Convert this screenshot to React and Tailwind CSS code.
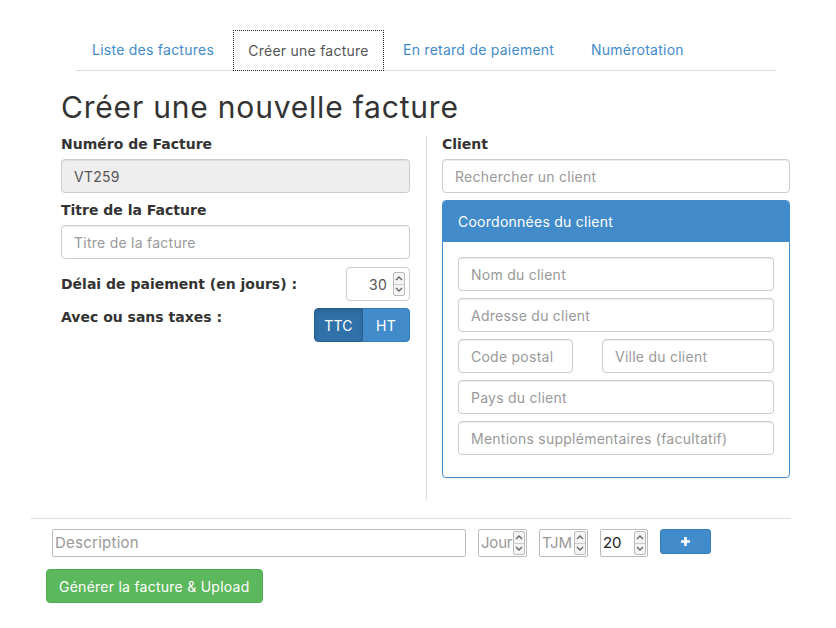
import React from "react";

const inputCls =
  "block w-full h-[34px] px-3 text-[14px] text-[#555] bg-white border border-[#ccc] rounded-[4px] shadow-[inset_0_1px_1px_rgba(0,0,0,0.075)] placeholder:text-[#999] outline-none tracking-[0.25px]";

const bold = { fontFamily: "'DejaVu Sans', sans-serif", letterSpacing: 0 };

function Spinner() {
  return (
    <div className="flex flex-col w-[12px] h-[24px] border border-[#bbb] rounded-[2px] bg-[#f4f4f4] shrink-0">
      <div className="flex-1 flex items-center justify-center border-b border-[#ccc]">
        <svg width="8" height="5" viewBox="0 0 8 5"><path d="M1 4 L4 1 L7 4" fill="none" stroke="#666" strokeWidth="1.4" /></svg>
      </div>
      <div className="flex-1 flex items-center justify-center">
        <svg width="8" height="5" viewBox="0 0 8 5"><path d="M1 1 L4 4 L7 1" fill="none" stroke="#666" strokeWidth="1.4" /></svg>
      </div>
    </div>
  );
}

function SmallNum({ w, value, placeholder }) {
  return (
    <div className={`flex items-center h-[28px] border border-[#bbb] rounded-[2px] pl-[2px] pr-[1px] bg-white ${w}`}>
      <span className={`flex-1 min-w-0 overflow-hidden whitespace-nowrap text-[15px] tracking-[-0.2px] ${value ? "text-[#222]" : "text-[#999]"}`}>
        {value || placeholder}
      </span>
      <Spinner />
    </div>
  );
}

export default function App() {
  return (
    <div className="w-[836px] h-[628px] bg-white text-[#333] text-[14px] tracking-[0.25px]" style={{ fontFamily: "Inter, sans-serif" }}>
      <div className="pt-[30px] pl-[76px] w-[776px]">
        <div className="flex border-b border-[#ddd] h-[41px]">
          <div className="w-[157px] pl-[16px] h-[40px] flex items-center text-[#428bca] pb-[1px]">Liste des factures</div>
          <div className="w-[151px] h-[41px] flex items-center justify-center text-[#555] border border-dotted border-[#222] bg-white pb-[1px]">Créer une facture</div>
          <div className="w-[192px] pl-[19px] h-[40px] flex items-center text-[#428bca] pb-[1px]">En retard de paiement</div>
          <div className="pl-[15px] h-[40px] flex items-center text-[#428bca] pb-[1px]">Numérotation</div>
        </div>
      </div>
      <div className="pl-[61px] pr-[46px]">
        <h1 className="text-[30px] leading-[33px] mt-[20px] mb-[10px] text-[#333] font-normal tracking-[0.8px]">Créer une nouvelle facture</h1>
        <div className="flex">
          <div className="w-[349px]">
            <label className="block font-bold text-[14px] leading-[20px] mb-[5px]" style={bold}>Numéro de Facture</label>
            <div className={`${inputCls} !bg-[#eee] flex items-center`}>VT259</div>
            <label className="block font-bold text-[14px] leading-[20px] mt-[7px] mb-[5px]" style={bold}>Titre de la Facture</label>
            <input className={inputCls} placeholder="Titre de la facture" />
            <div className="flex items-center justify-between mt-[8px]">
              <span className="font-bold" style={bold}>Délai de paiement (en jours) :</span>
              <div className="w-[64px] h-[34px] border border-[#ccc] rounded-[4px] flex items-center justify-end pr-[4px] gap-[6px]">
                <span className="text-[#555]">30</span>
                <Spinner />
              </div>
            </div>
            <div className="flex items-start justify-between mt-[7px]">
              <span className="font-bold mt-[-1px]" style={bold}>Avec ou sans taxes :</span>
              <div className="flex h-[34px] rounded-[4px] overflow-hidden">
                <div className="w-[49px] flex items-center justify-center bg-[#3071a9] text-white border border-[#285e8e] rounded-l-[4px] shadow-[inset_0_3px_5px_rgba(0,0,0,0.125)]">TTC</div>
                <div className="w-[47px] flex items-center justify-center bg-[#428bca] text-white border border-[#357ebd] border-l-0 rounded-r-[4px]">HT</div>
              </div>
            </div>
          </div>
          <div className="w-[32px] flex justify-center">
            <div className="w-px bg-[#ddd] h-[364px] mt-[2px]"></div>
          </div>
          <div className="w-[348px]">
            <label className="block font-bold text-[14px] leading-[20px] mb-[5px]" style={bold}>Client</label>
            <input className={inputCls} placeholder="Rechercher un client" />
            <div className="mt-[7px] border border-[#428bca] rounded-[4px] h-[278px] shadow-[0_1px_1px_rgba(0,0,0,0.05)]">
              <div className="h-[41px] bg-[#428bca] text-white px-[15px] flex items-center rounded-t-[3px]">Coordonnées du client</div>
              <div className="px-[15px] pt-[15px] flex flex-col gap-[7px]">
                <input className={inputCls} placeholder="Nom du client" />
                <input className={inputCls} placeholder="Adresse du client" />
                <div className="flex justify-between">
                  <input className={`${inputCls} !w-[115px]`} placeholder="Code postal" />
                  <input className={`${inputCls} !w-[172px]`} placeholder="Ville du client" />
                </div>
                <input className={inputCls} placeholder="Pays du client" />
                <input className={inputCls} placeholder="Mentions supplémentaires (facultatif)" />
              </div>
            </div>
          </div>
        </div>
      </div>
      <div className="mx-[31px] w-[760px] border-t border-[#ddd] mt-[18px]"></div>
      <div className="flex items-center pl-[52px] mt-[10px] gap-[12px]">
        <div className="w-[414px] h-[28px] border border-[#bbb] rounded-[2px] px-[2px] flex items-center text-[15px] text-[#999]">Description</div>
        <SmallNum w="w-[49px]" placeholder="Jours" />
        <SmallNum w="w-[49px]" placeholder="TJM" />
        <SmallNum w="w-[48px]" value="20" />
        <div className="w-[51px] h-[25px] bg-[#428bca] border border-[#357ebd] rounded-[3px] flex items-center justify-center self-start">
          <svg width="11" height="11" viewBox="0 0 11 11"><path d="M5.5 1 V10 M1 5.5 H10" stroke="white" strokeWidth="2.6" /></svg>
        </div>
      </div>
      <div className="pl-[46px] mt-[12px]">
        <div className="inline-flex items-center h-[34px] px-[12px] bg-[#5cb85c] border border-[#4cae4c] rounded-[4px] text-white">Générer la facture &amp; Upload</div>
      </div>
    </div>
  );
}
